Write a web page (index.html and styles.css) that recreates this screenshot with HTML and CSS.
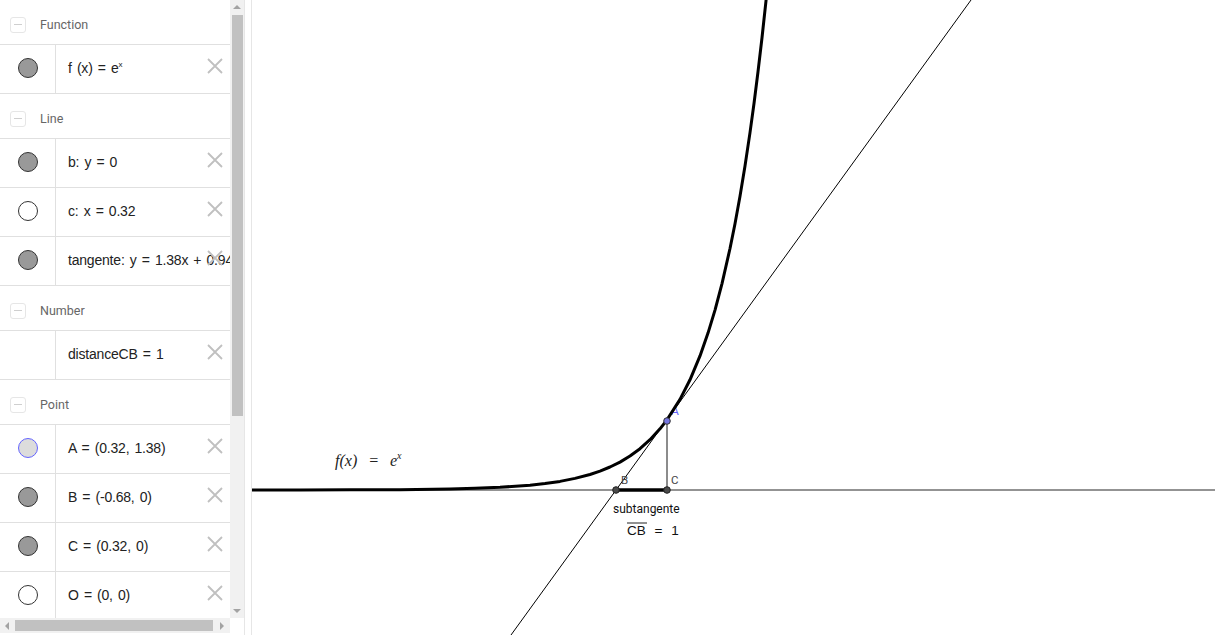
FILE: index.html
```html
<!DOCTYPE html>
<html>
<head>
<meta charset="utf-8">
<link rel="stylesheet" href="styles.css">
</head>
<body>
<div class="app">
  <div class="algebra">
    <div class="algebra-main">
      <div class="list">
        <div class="header"><span class="collapse"></span><span class="htext">Function</span></div>
        <div class="item"><div class="mark"><span class="dot filled"></span></div><div class="expr">f (x) = e<sup>x</sup></div><svg class="del" viewBox="0 0 16 16"><path d="M1 1L15 15M15 1L1 15"/></svg></div>
        <div class="header"><span class="collapse"></span><span class="htext">Line</span></div>
        <div class="item"><div class="mark"><span class="dot filled"></span></div><div class="expr">b: y = 0</div><svg class="del" viewBox="0 0 16 16"><path d="M1 1L15 15M15 1L1 15"/></svg></div>
        <div class="item"><div class="mark"><span class="dot empty"></span></div><div class="expr">c: x = 0.32</div><svg class="del" viewBox="0 0 16 16"><path d="M1 1L15 15M15 1L1 15"/></svg></div>
        <div class="item"><div class="mark"><span class="dot filled"></span></div><div class="expr">tangente: y = 1.38x + 0.94</div><svg class="del" viewBox="0 0 16 16"><path d="M1 1L15 15M15 1L1 15"/></svg></div>
        <div class="header"><span class="collapse"></span><span class="htext">Number</span></div>
        <div class="item"><div class="mark"></div><div class="expr">distanceCB = 1</div><svg class="del" viewBox="0 0 16 16"><path d="M1 1L15 15M15 1L1 15"/></svg></div>
        <div class="header"><span class="collapse"></span><span class="htext">Point</span></div>
        <div class="item"><div class="mark"><span class="dot pointa"></span></div><div class="expr">A = (0.32, 1.38)</div><svg class="del" viewBox="0 0 16 16"><path d="M1 1L15 15M15 1L1 15"/></svg></div>
        <div class="item"><div class="mark"><span class="dot filled"></span></div><div class="expr">B = (-0.68, 0)</div><svg class="del" viewBox="0 0 16 16"><path d="M1 1L15 15M15 1L1 15"/></svg></div>
        <div class="item"><div class="mark"><span class="dot filled"></span></div><div class="expr">C = (0.32, 0)</div><svg class="del" viewBox="0 0 16 16"><path d="M1 1L15 15M15 1L1 15"/></svg></div>
        <div class="item"><div class="mark"><span class="dot empty"></span></div><div class="expr">O = (0, 0)</div><svg class="del" viewBox="0 0 16 16"><path d="M1 1L15 15M15 1L1 15"/></svg></div>
      </div>
      <div class="vscroll">
        <span class="arrow up"></span>
        <div class="vthumb"></div>
        <div class="vspace"></div>
        <span class="arrow down"></span>
      </div>
    </div>
    <div class="hscroll-row">
      <div class="hscroll">
        <span class="arrow left"></span>
        <div class="hthumb"></div>
        <span class="arrow right"></span>
      </div>
      <div class="corner"></div>
    </div>
  </div>
  <div class="splitter"></div>
  <div class="graph">
    <svg class="plot" viewBox="252 0 965 635" width="965" height="635">
      <line x1="252" y1="490" x2="1215" y2="490" class="axis"/>
      <line x1="511" y1="635" x2="971" y2="0" class="tangent"/>
      <line x1="667" y1="421" x2="667" y2="490" class="vseg"/>
      <text x="671" y="415" class="lbl-a">A</text>
      <polyline class="curve" points="252,489.98 300,489.95 350,489.86 400,489.63 450,489.0 475,488.37 500,487.34 530,485.2 545,483.6 560,481.4 575,478.4 590,474.5 600,471.1 610,467.0 620,462.1 630,456.0 640,448.7 650,439.7 660,428.8 667,419.8 680,399.4 690,379.8 700,355.9 708,333.1 715,310.1 722,283.6 730,248.5 735,223.7 740,196.2 745,166.0 750,132.6 754,103.5 758,71.8 762,37.8 766,0.8 767,-10"/>
      <line x1="616" y1="490" x2="667" y2="490" class="subt"/>
      <circle cx="616" cy="490" r="3.3" class="pt"/>
      <circle cx="667" cy="490" r="3.3" class="pt"/>
      <circle cx="667" cy="421" r="3.3" class="pta"/>
      <text x="621" y="484" class="lbl">B</text>
      <text x="671" y="484" class="lbl">C</text>
      <text x="613" y="513" class="cap">subtangente</text>
      <text x="627" y="535" class="cap2">CB = 1</text>
      <line x1="627" y1="523" x2="647" y2="523" class="over"/>
      <text x="335" y="466" class="fx">f(x) = e<tspan dy="-7" class="sup">x</tspan></text>
    </svg>
  </div>
</div>
</body>
</html>
```
FILE: styles.css
```css
html, body {
  margin: 0;
  padding: 0;
  background: #fff;
}
body {
  width: 1217px;
  height: 635px;
  overflow: hidden;
  font-family: "Liberation Sans", Arial, sans-serif;
}
.app {
  display: flex;
  height: 635px;
}
.algebra {
  width: 244px;
  display: flex;
  flex-direction: column;
}
.algebra-main {
  display: flex;
  height: 618px;
}
.list {
  width: 230px;
  overflow: hidden;
  display: flex;
  flex-direction: column;
  flex-shrink: 0;
}
.header {
  flex-shrink: 0;
  border-bottom: 1px solid #e0e0e0;
  display: flex;
  align-items: center;
  padding-top: 5px;
  box-sizing: content-box;
  height: 39px;
}
.collapse {
  width: 14px;
  height: 14px;
  margin-left: 10px;
  border: 1px solid #e6e6e6;
  border-radius: 3px;
  display: flex;
  align-items: center;
  justify-content: center;
}
.collapse::before {
  content: "";
  width: 8px;
  height: 1.5px;
  background: #cfcfcf;
}
.htext {
  margin-left: 14px;
  font-family: Roboto, "Liberation Sans", sans-serif;
  font-size: 12.5px;
  color: #666;
}
.item {
  height: 48px;
  flex-shrink: 0;
  border-bottom: 1px solid #e0e0e0;
  display: flex;
  align-items: center;
  position: relative;
}
.mark {
  width: 56px;
  height: 100%;
  border-right: 1px solid #e0e0e0;
  display: flex;
  align-items: center;
  justify-content: center;
  flex-shrink: 0;
  padding-bottom: 2px;
  box-sizing: border-box;
}
.dot {
  width: 18px;
  height: 18px;
  border-radius: 50%;
  box-sizing: content-box;
}
.dot.filled {
  background: #999;
  border: 1px solid #333;
}
.dot.empty {
  background: #fff;
  border: 1px solid #333;
}
.dot.pointa {
  background: #dcdcdc;
  border: 1px solid #6464ff;
}
.expr {
  margin-left: 12px;
  font-size: 14px;
  color: #222;
  white-space: nowrap;
  padding-bottom: 3px;
  letter-spacing: -0.2px;
  word-spacing: 1.5px;
}
.expr sup {
  font-size: 8px;
  vertical-align: 6px;
  line-height: 0;
}
.del {
  position: absolute;
  left: 207px;
  top: 13px;
  width: 16px;
  height: 16px;
}
.del path {
  stroke: #c0c0c0;
  stroke-width: 1.8;
  fill: none;
}
.vscroll {
  width: 14px;
  background: #f1f1f1;
  display: flex;
  flex-direction: column;
  align-items: center;
}
.arrow {
  width: 0;
  height: 0;
  display: block;
  flex-shrink: 0;
}
.arrow.up {
  margin-top: 5px;
  border-left: 4px solid transparent;
  border-right: 4px solid transparent;
  border-bottom: 4px solid #a3a3a3;
}
.arrow.down {
  margin-bottom: 5px;
  border-left: 4px solid transparent;
  border-right: 4px solid transparent;
  border-top: 4px solid #a3a3a3;
}
.vthumb {
  margin-top: 6px;
  width: 11px;
  height: 401px;
  background: #c1c1c1;
  flex-shrink: 0;
}
.vspace {
  flex: 1;
}
.hscroll-row {
  display: flex;
  height: 15px;
}
.hscroll {
  width: 230px;
  background: #f1f1f1;
  display: flex;
  align-items: center;
}
.arrow.left {
  margin-left: 5px;
  border-top: 4px solid transparent;
  border-bottom: 4px solid transparent;
  border-right: 4px solid #a3a3a3;
}
.arrow.right {
  margin-left: 7px;
  border-top: 4px solid transparent;
  border-bottom: 4px solid transparent;
  border-left: 4px solid #a3a3a3;
}
.hthumb {
  margin-left: 6px;
  width: 198px;
  height: 11px;
  background: #c1c1c1;
}
.corner {
  width: 14px;
  background: #fff;
}
.splitter {
  width: 6px;
  border-left: 1px solid #e6e6e6;
  border-right: 1px solid #e6e6e6;
  background: #fff;
  flex-shrink: 0;
}
.graph {
  flex: 1;
  overflow: hidden;
}
.plot {
  display: block;
}
.axis {
  stroke: #6f6f6f;
  stroke-width: 1.3;
}
.tangent {
  stroke: #000;
  stroke-width: 1;
}
.vseg {
  stroke: #666;
  stroke-width: 1.5;
}
.curve {
  fill: none;
  stroke: #000;
  stroke-width: 3;
  stroke-linejoin: round;
}
.subt {
  stroke: #000;
  stroke-width: 3.5;
}
.pt {
  fill: #4a4a4a;
  stroke: #222;
  stroke-width: 1;
}
.pta {
  fill: #7575e0;
  stroke: #333;
  stroke-width: 1;
}
.lbl {
  font-family: Roboto, "Liberation Sans", sans-serif;
  font-size: 11.5px;
  fill: #444;
}
.lbl-a {
  font-family: Roboto, "Liberation Sans", sans-serif;
  font-size: 12px;
  fill: #6464ff;
}
.cap {
  font-family: Roboto, "Liberation Sans", sans-serif;
  font-size: 12px;
  fill: #111;
}
.cap2 {
  font-family: "Liberation Sans", sans-serif;
  font-size: 13.5px;
  fill: #111;
  word-spacing: 5px;
}
.over {
  stroke: #222;
  stroke-width: 1;
}
.fx {
  font-family: "Liberation Serif", serif;
  font-style: italic;
  font-size: 16px;
  fill: #222;
  word-spacing: 7px;
}
.sup {
  font-size: 10px;
}
```
